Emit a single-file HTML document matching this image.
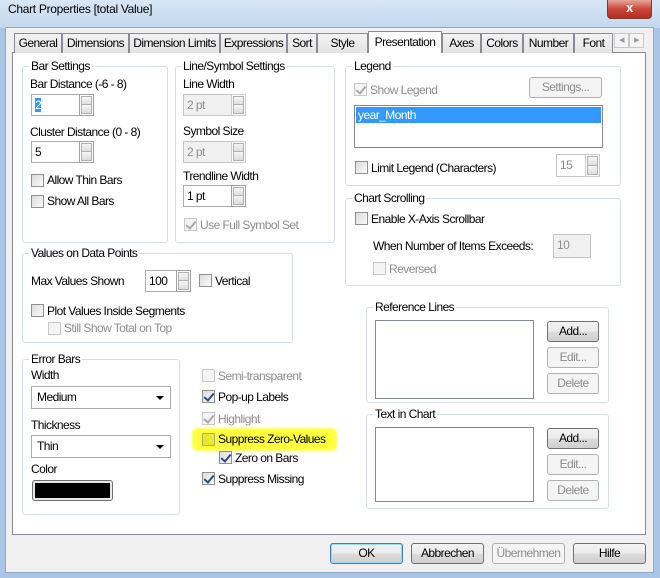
<!DOCTYPE html>
<html><head><meta charset="utf-8"><style>
*{box-sizing:border-box;margin:0;padding:0}
body{width:660px;height:578px;overflow:hidden;background:#a9c6e6;font-family:"Liberation Sans",sans-serif;font-size:12px;letter-spacing:-0.55px;color:#000;position:relative}
.a{position:absolute}
.t{position:absolute;white-space:nowrap;line-height:14px}
.g{position:absolute;border:1px solid #d5dfe5;border-radius:3px}
.gl{position:absolute;background:#fff;padding:0 2px;line-height:14px;white-space:nowrap}
.cb{position:absolute;width:13px;height:13px;border:1px solid #8e8f8f;background:linear-gradient(135deg,#dcdcdc,#fafafa)}
.cb.d{border-color:#c8c8c8;background:#f4f4f4}
.ck::after{content:"";position:absolute;left:3px;top:0px;width:4px;height:8px;border:solid #2b4a8a;border-width:0 2px 2px 0;transform:rotate(40deg)}
.ck.d::after{border-color:#a8a8a8}
.dis{color:#8d8d8d}
.in{position:absolute;border:1px solid #abadb3;background:#fff;padding:3px 3px;line-height:14px}
.in.d{background:#f0f0f0;color:#8d8d8d;border-color:#c5c5c5}
.sp{position:absolute;width:15px;border:1px solid #a0a0a0;background:#fff}
.sp::before,.sp::after{content:"";position:absolute;left:1px;right:1px;height:calc(50% - 2px);border:1px solid #b0b0b0;background:linear-gradient(#f6f6f6,#dcdcdc)}
.sp::before{top:1px}.sp::after{bottom:1px}
.btn{position:absolute;border:1px solid #707070;border-radius:3px;background:linear-gradient(#f2f2f2 0%,#ebebeb 50%,#dddddd 51%,#cfcfcf 100%);text-align:center;line-height:19px}
.btn.d{border-color:#adb2b5;background:#f4f4f4;color:#8d8d8d}
.tab{position:absolute;top:33px;height:20px;border:1px solid #898c95;border-bottom:none;background:linear-gradient(#f3f3f3,#e3e3e3);text-align:center;line-height:18px;white-space:nowrap;overflow:hidden}
.cmb{position:absolute;border:1px solid #acacac;background:#fff;padding-left:5px;line-height:20px}
.cmb::after{content:"";position:absolute;right:6px;top:9px;border:4px solid transparent;border-top:4px solid #000}
</style></head><body>
<div class="a" style="left:0;top:0;width:660px;height:28px;background:linear-gradient(#d8e6f5,#c4d8ee)"></div>
<div class="t" style="left:8px;top:2px;letter-spacing:-0.3px">Chart Properties [total Value]</div>
<div class="a" style="left:607px;top:0;width:45px;height:19px;border:1px solid #7a3a33;border-top:none;border-radius:0 0 4px 4px;background:linear-gradient(#e7a59b,#c8473a 50%,#b52d1e);color:#fff;text-align:center;font-weight:bold;font-size:13px;line-height:16px">x</div>
<div class="a" style="left:5px;top:27px;width:649px;height:546px;background:#f0f0f0;border:1px solid #8fa8c4"></div>
<div class="a" style="left:12px;top:52px;width:634px;height:483px;background:#fff;border:1px solid #898c95"></div>
<div class="tab" style="left:14px;width:48px">General</div>
<div class="tab" style="left:62px;width:67px">Dimensions</div>
<div class="tab" style="left:129px;width:91px">Dimension Limits</div>
<div class="tab" style="left:220px;width:67px">Expressions</div>
<div class="tab" style="left:287px;width:30px">Sort</div>
<div class="tab" style="left:317px;width:51px">Style</div>
<div class="tab" style="left:368px;top:31px;height:22px;width:74px;background:#fff;line-height:20px">Presentation</div>
<div class="tab" style="left:442px;width:39px">Axes</div>
<div class="tab" style="left:481px;width:42px">Colors</div>
<div class="tab" style="left:523px;width:51px">Number</div>
<div class="tab" style="left:574px;width:39px">Font</div>
<div class="a" style="left:614px;top:33px;width:15px;height:15px;border:1px solid #c8c8c8;background:#f4f4f4;font-size:7px;color:#999;text-align:center;line-height:13px">◀</div>
<div class="a" style="left:629px;top:33px;width:15px;height:15px;border:1px solid #c8c8c8;background:#f4f4f4;font-size:7px;color:#999;text-align:center;line-height:13px">▶</div>

<div class="g" style="left:22px;top:66px;width:146px;height:177px"></div>
<div class="gl" style="left:29px;top:59px">Bar Settings</div>
<div class="t" style="left:30px;top:77px">Bar Distance (-6 - 8)</div>
<div class="in" style="left:31px;top:94px;width:49px;height:22px"><span style="background:#3399ff;color:#fff">2</span></div>
<div class="sp" style="left:79px;top:94px;height:22px"></div>
<div class="t" style="left:30px;top:125px">Cluster Distance (0 - 8)</div>
<div class="in" style="left:31px;top:141px;width:49px;height:22px">5</div>
<div class="sp" style="left:79px;top:141px;height:22px"></div>
<div class="cb" style="left:31px;top:174px"></div><div class="t" style="left:47px;top:173px">Allow Thin Bars</div>
<div class="cb" style="left:31px;top:195px"></div><div class="t" style="left:47px;top:194px">Show All Bars</div>

<div class="g" style="left:175px;top:66px;width:160px;height:177px"></div>
<div class="gl" style="left:181px;top:59px">Line/Symbol Settings</div>
<div class="t" style="left:183px;top:77px">Line Width</div>
<div class="in d" style="left:183px;top:94px;width:49px;height:22px">2 pt</div>
<div class="sp" style="left:231px;top:94px;height:22px;border-color:#ccc"></div>
<div class="t" style="left:183px;top:124px">Symbol Size</div>
<div class="in d" style="left:183px;top:141px;width:49px;height:22px">2 pt</div>
<div class="sp" style="left:231px;top:141px;height:22px;border-color:#ccc"></div>
<div class="t" style="left:183px;top:169px">Trendline Width</div>
<div class="in" style="left:183px;top:185px;width:49px;height:22px">1 pt</div>
<div class="sp" style="left:231px;top:185px;height:22px"></div>
<div class="cb d ck" style="left:184px;top:218px"></div><div class="t dis" style="left:200px;top:218px">Use Full Symbol Set</div>

<div class="g" style="left:22px;top:253px;width:271px;height:90px"></div>
<div class="gl" style="left:29px;top:246px">Values on Data Points</div>
<div class="t" style="left:31px;top:274px">Max Values Shown</div>
<div class="in" style="left:145px;top:270px;width:32px;height:22px">100</div>
<div class="sp" style="left:176px;top:270px;height:22px"></div>
<div class="cb" style="left:199px;top:274px"></div><div class="t" style="left:215px;top:274px">Vertical</div>
<div class="cb" style="left:31px;top:304px"></div><div class="t" style="left:47px;top:304px">Plot Values Inside Segments</div>
<div class="cb d" style="left:48px;top:322px"></div><div class="t dis" style="left:64px;top:321px">Still Show Total on Top</div>

<div class="g" style="left:22px;top:359px;width:158px;height:156px"></div>
<div class="gl" style="left:29px;top:352px">Error Bars</div>
<div class="t" style="left:31px;top:368px">Width</div>
<div class="cmb" style="left:31px;top:386px;width:140px;height:23px">Medium</div>
<div class="t" style="left:31px;top:418px">Thickness</div>
<div class="cmb" style="left:31px;top:435px;width:140px;height:23px">Thin</div>
<div class="t" style="left:31px;top:462px">Color</div>
<div class="a" style="left:32px;top:480px;width:81px;height:21px;border:1px solid #707070;border-radius:3px;background:#e8e8e8;padding:2px"><div style="width:100%;height:100%;background:#000"></div></div>

<div class="a" style="left:192px;top:428px;width:145px;height:23px;background:#ffff40;border-radius:6px;filter:blur(1px)"></div>
<div class="cb d" style="left:202px;top:369px"></div><div class="t dis" style="left:218px;top:369px">Semi-transparent</div>
<div class="cb ck" style="left:202px;top:390px"></div><div class="t" style="left:218px;top:390px">Pop-up Labels</div>
<div class="cb d ck" style="left:202px;top:412px"></div><div class="t dis" style="left:218px;top:412px">Highlight</div>
<div class="cb" style="left:202px;top:433px;background:#e8e830;border-color:#b0b060"></div><div class="t" style="left:218px;top:432px">Suppress Zero-Values</div>
<div class="cb ck" style="left:219px;top:451px"></div><div class="t" style="left:235px;top:451px">Zero on Bars</div>
<div class="cb ck" style="left:202px;top:472px"></div><div class="t" style="left:218px;top:472px">Suppress Missing</div>

<div class="g" style="left:345px;top:66px;width:276px;height:120px"></div>
<div class="gl" style="left:352px;top:59px">Legend</div>
<div class="cb d ck" style="left:354px;top:83px"></div><div class="t dis" style="left:370px;top:83px">Show Legend</div>
<div class="btn d" style="left:529px;top:77px;width:73px;height:21px">Settings...</div>
<div class="a" style="left:354px;top:105px;width:249px;height:43px;border:1px solid #828790;background:#fff"><div style="margin:1px;background:#3399ff;color:#fff;height:16px;line-height:16px;padding-left:2px">year_Month</div></div>
<div class="cb" style="left:355px;top:161px"></div><div class="t" style="left:371px;top:161px">Limit Legend (Characters)</div>
<div class="in d" style="left:556px;top:154px;width:30px;height:23px;background:#fff">15</div>
<div class="sp" style="left:585px;top:154px;height:23px;border-color:#ccc"></div>

<div class="g" style="left:345px;top:198px;width:276px;height:88px"></div>
<div class="gl" style="left:352px;top:191px">Chart Scrolling</div>
<div class="cb" style="left:355px;top:212px"></div><div class="t" style="left:371px;top:212px">Enable X-Axis Scrollbar</div>
<div class="t" style="left:373px;top:239px">When Number of Items Exceeds:</div>
<div class="in d" style="left:553px;top:234px;width:38px;height:24px">10</div>
<div class="cb d" style="left:373px;top:262px"></div><div class="t dis" style="left:389px;top:262px">Reversed</div>

<div class="g" style="left:366px;top:307px;width:243px;height:96px"></div>
<div class="gl" style="left:373px;top:300px">Reference Lines</div>
<div class="a" style="left:375px;top:320px;width:159px;height:79px;border:1px solid #828790"></div>
<div class="btn" style="left:547px;top:321px;width:52px;height:21px">Add...</div>
<div class="btn d" style="left:547px;top:347px;width:52px;height:21px">Edit...</div>
<div class="btn d" style="left:547px;top:373px;width:52px;height:21px">Delete</div>

<div class="g" style="left:366px;top:414px;width:243px;height:95px"></div>
<div class="gl" style="left:373px;top:407px">Text in Chart</div>
<div class="a" style="left:375px;top:427px;width:159px;height:75px;border:1px solid #828790"></div>
<div class="btn" style="left:547px;top:428px;width:52px;height:21px">Add...</div>
<div class="btn d" style="left:547px;top:454px;width:52px;height:21px">Edit...</div>
<div class="btn d" style="left:547px;top:480px;width:52px;height:21px">Delete</div>

<div class="btn" style="left:330px;top:543px;width:73px;height:21px;border-color:#3c7fb1;box-shadow:inset 0 0 0 1px #9ad8f4">OK</div>
<div class="btn" style="left:411px;top:543px;width:73px;height:21px">Abbrechen</div>
<div class="btn d" style="left:492px;top:543px;width:73px;height:21px">Übernehmen</div>
<div class="btn" style="left:573px;top:543px;width:73px;height:21px">Hilfe</div>
</body></html>
